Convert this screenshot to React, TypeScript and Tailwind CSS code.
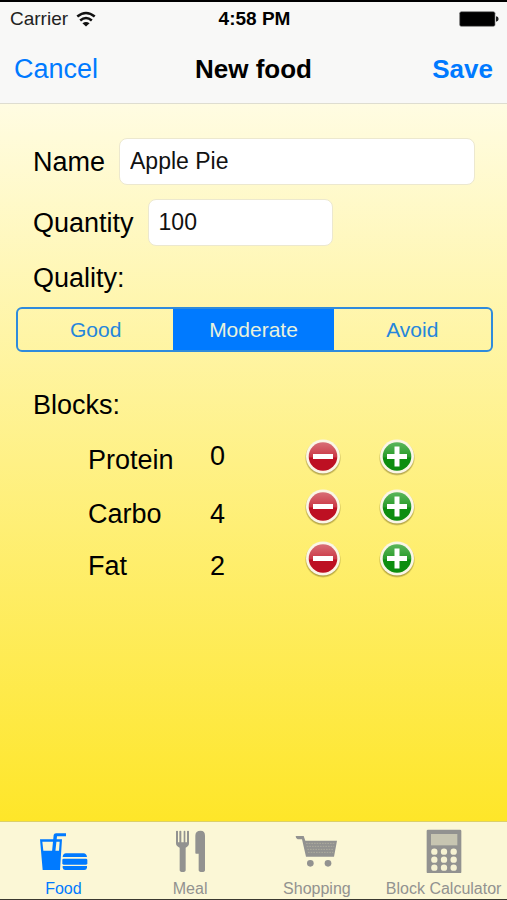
import React, { useState } from 'react';

type Quality = 'Good' | 'Moderate' | 'Avoid';

const qualities: Quality[] = ['Good', 'Moderate', 'Avoid'];

const WifiIcon = () => (
  <svg className="h-4 w-5" viewBox="234 27 62 49" fill="none" stroke="#111" aria-hidden="true">
    <path d="M238 44Q265 22 292 44" strokeWidth="8" />
    <path d="M247 56Q265 41 283 56" strokeWidth="8" />
    <path d="M254 65Q265 57 276 65L265 75Z" fill="#111" stroke="none" />
  </svg>
);

const BatteryIcon = () => (
  <svg className="h-4 w-10" viewBox="0 0 120 48" aria-hidden="true">
    <rect x="2" y="2" width="106" height="44" rx="5" fill="#000" stroke="#777" strokeWidth="2" />
    <path d="M111 16Q119 17 119 24Q119 31 111 32Z" fill="#222" />
  </svg>
);

const RoundIcon = ({ kind }: { kind: 'minus' | 'plus' }) => {
  const top = kind === 'minus' ? '#d86f77' : '#5cb65c';
  const mid = kind === 'minus' ? '#cb3a47' : '#2a9c2b';
  const low = kind === 'minus' ? '#bd1022' : '#0d8d0f';
  return (
    <svg className="h-full w-full" viewBox="0 0 36 38" aria-hidden="true">
      <defs>
        <linearGradient id={`disc-${kind}`} x1="0" y1="0" x2="0" y2="1">
          <stop offset="0" stopColor={top} />
          <stop offset="0.5" stopColor={mid} />
          <stop offset="0.56" stopColor={low} />
          <stop offset="1" stopColor={low} />
        </linearGradient>
        <radialGradient id={`shade-${kind}`}>
          <stop offset="0.85" stopColor="#6b5a10" stopOpacity="0.7" />
          <stop offset="1" stopColor="#6b5a10" stopOpacity="0" />
        </radialGradient>
      </defs>
      <circle cx="18" cy="19.8" r="18.2" fill={`url(#shade-${kind})`} />
      <circle cx="18" cy="18.5" r="17" fill="#fbf6e6" />
      <circle cx="18" cy="18.5" r="14.3" fill={`url(#disc-${kind})`} />
      <rect x="8" y="16" width="20" height="5" fill="#fff" />
      {kind === 'plus' && <rect x="15.5" y="8.5" width="5" height="20" fill="#fff" />}
    </svg>
  );
};

const FoodIcon = () => (
  <svg className="h-[45px] w-[54px]" viewBox="109 55 162 135" fill="currentColor" aria-hidden="true">
    <path fillRule="evenodd" d="M121 89H187L181 181H129ZM128 96L131 123H178L180 96Z" />
    <path d="M157 126L162 76Q163 71 169 71H199V80H172L167 126Z" />
    <path d="M189 142Q190 131 199 131H252Q260 131 262 142Z" />
    <rect x="188" y="147" width="75" height="18" rx="4" />
    <path d="M189 169H262V174Q261 181 254 181H197Q190 181 189 174Z" />
  </svg>
);

const MealIcon = () => (
  <svg className="h-[45px] w-[54px]" viewBox="489 55 162 135" fill="currentColor" aria-hidden="true">
    <path d="M528 65Q528 63 531 63Q534 63 534 65V98H538V65Q538 63 541 63Q544 63 544 65V98H551V65Q551 63 554 63Q556 63 556 65V98H561V65Q561 63 564 63Q567 63 567 65V101Q567 110 557 114V181Q557 187 548 187Q539 187 539 181V114Q528 110 528 101Z" />
    <path d="M586 78Q586 63 602 63Q615 63 615 78V181Q615 187 606 187Q596 187 596 181V132H588Q586 132 586 129Z" />
  </svg>
);

const ShoppingIcon = () => (
  <svg className="h-[45px] w-[54px]" viewBox="111 55 162 135" fill="currentColor" aria-hidden="true">
    <path d="M128 79H152L157 93H252L243 141H159L147 89H134Q128 87 128 79Z" />
    <g stroke="#bab8a4" strokeWidth="2" strokeDasharray="5 3" fill="none">
      <path d="M159 101H246" />
      <path d="M161 110H244" />
      <path d="M163 119H243" />
      <path d="M165 128H241" />
    </g>
    <circle cx="172" cy="161" r="10" />
    <circle cx="225" cy="161" r="10" />
  </svg>
);

const CalculatorIcon = () => (
  <svg className="h-[45px] w-[54px]" viewBox="491 55 162 135" aria-hidden="true">
    <rect x="520" y="60" width="104" height="131" rx="4" fill="currentColor" />
    <rect x="533" y="73" width="79" height="34" fill="#c7c5b1" />
    {[126, 150, 174].map((cy) =>
      [543, 572, 601].map((cx) => <circle key={`${cx}-${cy}`} cx={cx} cy={cy} r="9.5" fill="#f6f2d2" />),
    )}
  </svg>
);

const tabs = [
  { label: 'Food', icon: <FoodIcon /> },
  { label: 'Meal', icon: <MealIcon /> },
  { label: 'Shopping', icon: <ShoppingIcon /> },
  { label: 'Block Calculator', icon: <CalculatorIcon /> },
];

// the protein row is a bit tighter than the two below it
const blockRows = [
  { key: 'Protein', row: 'h-11 mb-1.5', value: 'self-start' },
  { key: 'Carbo', row: 'h-[52px]', value: '' },
  { key: 'Fat', row: 'h-[52px]', value: '' },
];

const App = () => {
  const [name, setName] = useState('Apple Pie');
  const [quantity, setQuantity] = useState('100');
  const [quality, setQuality] = useState<Quality>('Moderate');
  const [activeTab, setActiveTab] = useState('Food');
  const [blocks, setBlocks] = useState<Record<string, number>>({ Protein: 0, Carbo: 4, Fat: 2 });

  const changeBlock = (key: string, step: number) => {
    setBlocks((prev) => ({ ...prev, [key]: Math.max(0, prev[key] + step) }));
  };

  const inputClass =
    'h-[47px] rounded-lg border border-[#ece8cf] bg-white px-2.5 text-[23px] text-[#111] outline-none';

  return (
    <div className="flex min-h-screen flex-col border-t-2 border-b border-t-black border-b-[#3a3830] bg-[#f8f8f8] font-['Liberation_Sans',Arial,sans-serif] text-black">
      <header className="border-b border-[#deddd0] bg-[#f8f8f7]">
        <div className="grid h-[34px] grid-cols-3 items-center pr-2 pl-2.5 text-[19px]">
          <div className="flex items-center gap-2 text-[#222]">
            <span>Carrier</span>
            <WifiIcon />
          </div>
          <span className="text-center font-bold">4:58 PM</span>
          <div className="flex justify-end">
            <BatteryIcon />
          </div>
        </div>
        <div className="grid h-[67px] grid-cols-[1fr_auto_1fr] items-center px-3.5 text-[26px] text-[#007aff]">
          <button type="button" className="justify-self-start text-[27px]">
            Cancel
          </button>
          <h1 className="font-bold text-black">New food</h1>
          <button type="button" className="justify-self-end font-bold">
            Save
          </button>
        </div>
      </header>

      <main className="flex-1 bg-linear-to-b/srgb from-[#fffce2] to-[#fee629] pt-[34px] text-[27px] leading-9">
        <div className="flex flex-col gap-3.5 pr-8 pl-[33px]">
          <div className="flex items-center gap-3.5">
            <label htmlFor="name">Name</label>
            <input
              id="name"
              type="text"
              value={name}
              onChange={(e) => setName(e.target.value)}
              className={`${inputClass} min-w-0 flex-1`}
            />
          </div>
          <div className="flex items-center gap-3.5">
            <label htmlFor="quantity">Quantity</label>
            <input
              id="quantity"
              type="text"
              inputMode="numeric"
              value={quantity}
              onChange={(e) => setQuantity(e.target.value)}
              className={`${inputClass} w-[185px]`}
            />
          </div>
          <h2 id="quality-title">Quality:</h2>
        </div>

        <div
          role="radiogroup"
          aria-labelledby="quality-title"
          className="mr-3.5 ml-4 mt-[11px] grid h-[45px] grid-cols-[156fr_161fr_158fr] overflow-hidden rounded-md border-2 border-[#2f8bdc] text-[21px]"
        >
          {qualities.map((q) => (
            <label
              key={q}
              className={`relative flex items-center justify-center ${
                quality === q ? 'bg-[#007aff] text-[#e8f2dc]' : 'text-[#2586dc]'
              }`}
            >
              <input
                type="radio"
                name="quality"
                value={q}
                checked={quality === q}
                onChange={() => setQuality(q)}
                className="sr-only"
              />
              {q}
            </label>
          ))}
        </div>

        <h2 className="mt-[35px] mb-[15px] pl-[33px]">Blocks:</h2>
        {blockRows.map(({ key, row, value }) => (
          <div key={key} className={`flex items-center pl-[88px] ${row}`}>
            <span className="w-[122px]">{key}</span>
            <span className={`w-[95px] ${value}`}>{blocks[key]}</span>
            <div className="flex gap-[38px] self-start">
              <button
                type="button"
                aria-label={`Less ${key}`}
                onClick={() => changeBlock(key, -1)}
                className="h-[38px] w-9"
              >
                <RoundIcon kind="minus" />
              </button>
              <button
                type="button"
                aria-label={`More ${key}`}
                onClick={() => changeBlock(key, 1)}
                className="h-[38px] w-9"
              >
                <RoundIcon kind="plus" />
              </button>
            </div>
          </div>
        ))}
      </main>

      <nav className="grid h-[78px] grid-cols-4 border-t border-[#dcd068] bg-[#fbf7d6]">
        {tabs.map(({ label, icon }) => (
          <button
            key={label}
            type="button"
            onClick={() => setActiveTab(label)}
            className={`flex flex-col items-center gap-1.5 pt-1.5 ${
              activeTab === label ? 'text-[#007aff]' : 'text-[#929290]'
            }`}
          >
            {icon}
            <span className="text-base leading-5 whitespace-nowrap">{label}</span>
          </button>
        ))}
      </nav>
    </div>
  );
};

export default App;
